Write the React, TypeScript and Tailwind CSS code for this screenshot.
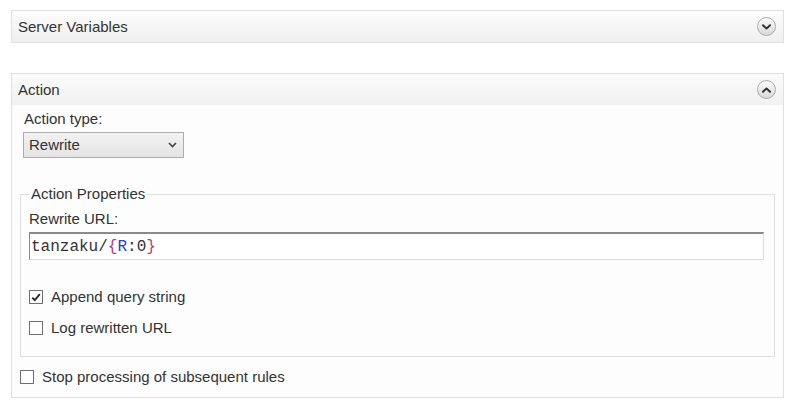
function RoundToggle({ open }: { open: boolean }) {
  return (
    <span className="flex h-[19px] w-[19px] items-center justify-center rounded-full border border-[#a9a9a9] bg-gradient-to-b from-[#fbfbfb] to-[#d9d9d9] shadow-[inset_0_1px_0_#fff]">
      <svg width="9" height="6" viewBox="0 0 9 6" className={open ? "rotate-180" : ""}>
        <path d="M1 1.2 L4.5 4.6 L8 1.2" fill="none" stroke="#2f2f2f" strokeWidth="1.9" strokeLinecap="round" strokeLinejoin="round" />
      </svg>
    </span>
  );
}

function Checkbox({ checked, label }: { checked?: boolean; label: string }) {
  return (
    <label className="flex h-[18px] items-center gap-[8px]">
      <span className="flex h-[14px] w-[14px] items-center justify-center border border-[#707070] bg-white">
        {checked && (
          <svg width="10" height="9" viewBox="0 0 10 9">
            <path d="M1.3 4.6 L3.8 7.2 L8.8 1.2" fill="none" stroke="#222" strokeWidth="1.8" />
          </svg>
        )}
      </span>
      <span>{label}</span>
    </label>
  );
}

export default function App() {
  return (
    <main
      className="min-h-screen bg-white px-[11px] pt-[10px] text-[15px] leading-[18px] text-[#333]"
      style={{ fontFamily: '"Liberation Sans", Arial, sans-serif' }}
    >
      <section className="w-[773px] border border-[#e0e0e0] bg-gradient-to-b from-[#fdfdfd] to-[#efefef]">
        <div className="flex h-[31px] items-center justify-between pl-[6px] pr-[7px]">
          <span>Server Variables</span>
          <RoundToggle open={false} />
        </div>
      </section>

      <section className="mt-[30px] w-[773px] border border-[#e0e0e0] bg-[#fdfdfd]">
        <div className="flex h-[31px] items-center justify-between bg-gradient-to-b from-[#fbfbfb] to-[#f1f1f1] pl-[6px] pr-[7px]">
          <span>Action</span>
          <RoundToggle open />
        </div>

        <div className="px-[8px] pb-[11px]">
          <div className="pl-[4px] pt-[5px]">Action type:</div>
          <div className="mt-[4px] ml-[3px] flex h-[26px] w-[161px] items-center justify-between border border-[#acacac] bg-gradient-to-b from-[#f2f2f2] to-[#e4e4e4] pl-[5px] pr-[6px]">
            <span>Rewrite</span>
            <svg width="9" height="6" viewBox="0 0 9 6">
              <path d="M1 1 L4.5 4.5 L8 1" fill="none" stroke="#444" strokeWidth="1.6" />
            </svg>
          </div>

          <fieldset className="mt-[27px] w-[755px] border border-[#dedede] px-[8px] pb-[19px] pt-0">
            <legend className="px-[2px]">Action Properties</legend>
            <div className="mt-[7px]">Rewrite URL:</div>
            <div
              className="mt-[4px] flex h-[28px] w-[735px] items-center border border-[#dcdcdc] border-l-[#8a8a8a] border-t-2 border-t-[#8a8a8a] bg-white pl-[1px] text-[16px] text-[#333]"
              style={{ fontFamily: '"Liberation Mono", "Courier New", monospace' }}
            >
              <span>tanzaku/</span>
              <span className="text-[#b0407a]">{"{"}</span>
              <span className="text-[#2a3fd6]">R</span>
              <span>:0</span>
              <span className="text-[#b0407a]">{"}"}</span>
            </div>
            <div className="mt-[28px] flex flex-col gap-[13px]">
              <Checkbox checked label="Append query string" />
              <Checkbox label="Log rewritten URL" />
            </div>
          </fieldset>

          <div className="mt-[11px]">
            <Checkbox label="Stop processing of subsequent rules" />
          </div>
        </div>
      </section>
    </main>
  );
}
